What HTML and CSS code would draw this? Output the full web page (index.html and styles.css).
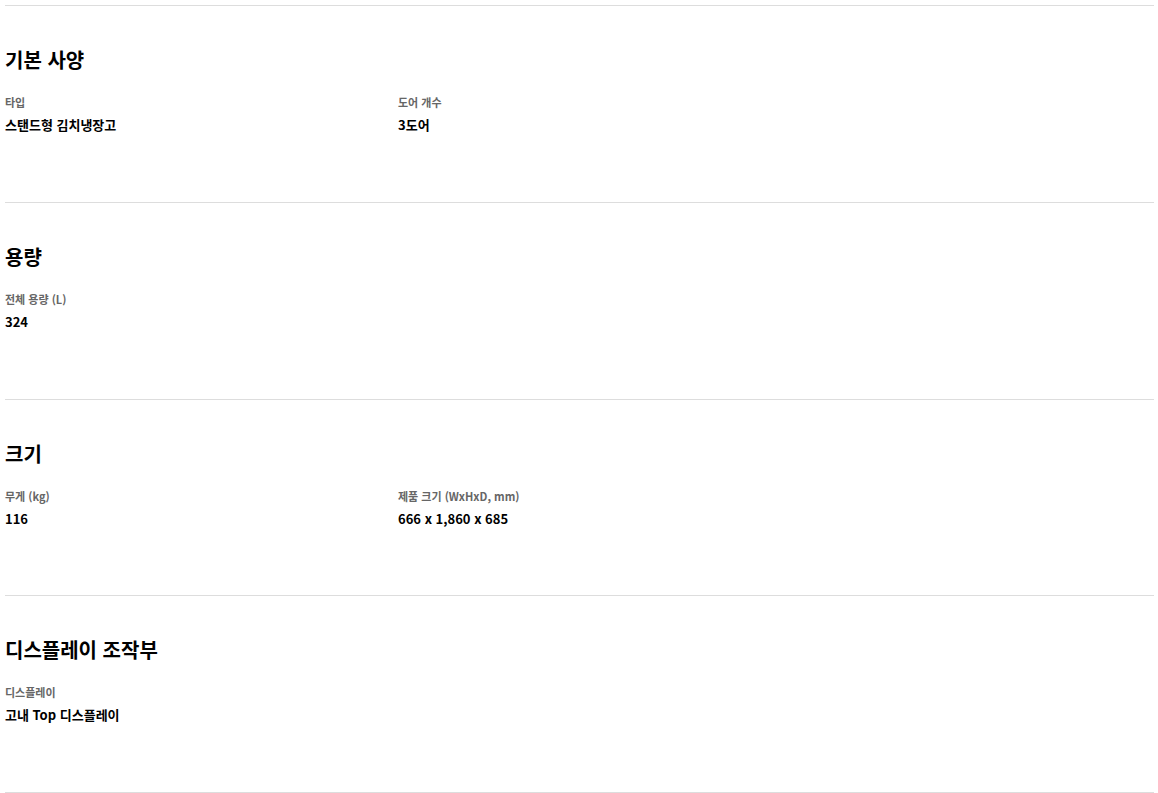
FILE: index.html
```html
<!DOCTYPE html>
<html lang="ko">
<head>
    <meta charset="UTF-8">
    <meta name="viewport" content="width=device-width, initial-scale=1.0">
    <title>제품 사양</title>
    <link rel="stylesheet" href="styles.css">
</head>
<body>
    <div class="spec-list">
        <section class="spec-group">
            <h3>기본 사양</h3>
            <div class="spec-grid">
                <div class="spec-item">
                    <div class="spec-label">타입</div>
                    <div class="spec-value">스탠드형 김치냉장고</div>
                </div>
                <div class="spec-item">
                    <div class="spec-label">도어 개수</div>
                    <div class="spec-value">3도어</div>
                </div>
            </div>
        </section>

        <section class="spec-group">
            <h3>용량</h3>
            <div class="spec-grid">
                <div class="spec-item">
                    <div class="spec-label">전체 용량 (L)</div>
                    <div class="spec-value">324</div>
                </div>
            </div>
        </section>

        <section class="spec-group">
            <h3>크기</h3>
            <div class="spec-grid">
                <div class="spec-item">
                    <div class="spec-label">무게 (kg)</div>
                    <div class="spec-value">116</div>
                </div>
                <div class="spec-item">
                    <div class="spec-label">제품 크기 (WxHxD, mm)</div>
                    <div class="spec-value">666 x 1,860 x 685</div>
                </div>
            </div>
        </section>

        <section class="spec-group">
            <h3>디스플레이 조작부</h3>
            <div class="spec-grid">
                <div class="spec-item">
                    <div class="spec-label">디스플레이</div>
                    <div class="spec-value">고내 Top 디스플레이</div>
                </div>
            </div>
        </section>
    </div>
</body>
</html>
```

FILE: styles.css
```css
body {
    margin: 0;
    font-family: "Noto Sans CJK KR", "Noto Sans", sans-serif;
    color: #000;
    background: #fff;
}

.spec-list {
    padding: 5px 4px 0 5px;
}

.spec-group {
    border-top: 1px solid #ddd;
    height: 195.75px;
}

/* нижняя линия после последнего блока */
.spec-list .spec-group:last-child {
    border-bottom: 1px solid #ddd;
}

.spec-group h3 {
    margin: 0;
    padding-top: 39px;
    font-size: 20px;
    line-height: 30px;
    font-weight: 700;
}

.spec-grid {
    display: grid;
    grid-template-columns: repeat(3, 1fr);
    column-gap: 30px;
    margin-top: 19px;
}

.spec-label {
    font-size: 11px;
    line-height: 16px;
    font-weight: 700;
    color: #666;
}

.spec-value {
    margin-top: 6px;
    font-size: 13px;
    line-height: 18px;
    font-weight: 700;
}
```
